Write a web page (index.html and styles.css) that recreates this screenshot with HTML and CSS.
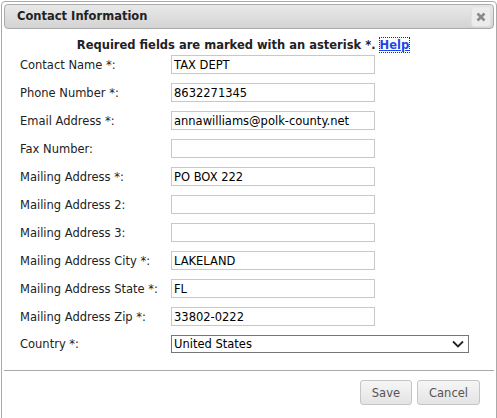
FILE: index.html
```html
<!DOCTYPE html>
<html>
<head>
<meta charset="utf-8">
<link rel="stylesheet" href="styles.css">
</head>
<body>
<div class="dialog">
  <div class="titlebar">
    <span class="title">Contact Information</span>
    <span class="close"><svg width="10" height="10" viewBox="0 0 10 10"><path d="M1.5 1.5 L8.5 8.5 M8.5 1.5 L1.5 8.5" stroke="#8a8a8a" stroke-width="2.6" stroke-linecap="butt"/></svg></span>
  </div>
  <div class="content">
    <p class="required">Required fields are marked with an asterisk *. <a class="help" href="#">Help</a></p>
    <div class="form">
      <label>Contact Name *:</label><input type="text" value="TAX DEPT">
      <label>Phone Number *:</label><input type="text" value="8632271345">
      <label>Email Address *:</label><input type="text" value="annawilliams@polk-county.net">
      <label>Fax Number:</label><input type="text" value="">
      <label>Mailing Address *:</label><input type="text" value="PO BOX 222">
      <label>Mailing Address 2:</label><input type="text" value="">
      <label>Mailing Address 3:</label><input type="text" value="">
      <label>Mailing Address City *:</label><input type="text" value="LAKELAND">
      <label>Mailing Address State *:</label><input type="text" value="FL">
      <label>Mailing Address Zip *:</label><input type="text" value="33802-0222">
      <label>Country *:</label>
      <div class="select"><span>United States</span><svg width="12" height="8" viewBox="0 0 12 8"><path d="M1 1.5 L6 6.5 L11 1.5" fill="none" stroke="#222" stroke-width="1.8"/></svg></div>
    </div>
  </div>
  <div class="buttonpane">
    <button class="btn">Save</button>
    <button class="btn">Cancel</button>
  </div>
</div>
</body>
</html>
```
FILE: styles.css
```css
html, body {
  margin: 0;
  padding: 0;
  background: #fff;
}
body {
  font-family: "DejaVu Sans", Verdana, sans-serif;
  font-size: 11.5px;
  color: #222;
}
.dialog {
  margin: 1px 0 0 1px;
  width: 490px;
  height: 430px;
  border: 1px solid #aaa;
  border-radius: 4px;
  padding: 2px;
}
.titlebar {
  height: 23px;
  border: 1px solid #aaa;
  border-radius: 4px;
  background: linear-gradient(#e9e9e9, #d3d3d3);
  display: flex;
  align-items: center;
  justify-content: space-between;
  padding: 0 2px 0 12px;
}
.title {
  font-weight: bold;
  font-size: 11.5px;
  color: #222;
  margin-top: -1px;
}
.close {
  width: 18px;
  height: 19px;
  border-radius: 3px;
  background: #ececec;
  border: 1px solid #e0e0e0;
  display: flex;
  align-items: center;
  justify-content: center;
}
.content {
  padding: 0 0 0 16px;
  height: 341px;
}
.required {
  margin: 0;
  padding-top: 9px;
  height: 17px;
  font-weight: bold;
  text-align: center;
  padding-right: 28px;
}
.help {
  color: #1a47e8;
  text-decoration: underline;
  outline: 1px dotted #333;
  outline-offset: 0;
}
.form {
  display: grid;
  grid-template-columns: 151px 204px;
  row-gap: 9px;
  align-items: center;
  margin-top: 0;
}
.form label {
  font-size: 11.5px;
  color: #222;
}
.form input {
  box-sizing: border-box;
  width: 204px;
  height: 19px;
  border: 1px solid #c8c8c8;
  padding: 0 2px;
  margin: 0;
  font-family: "DejaVu Sans", Verdana, sans-serif;
  font-size: 11.5px;
  color: #000;
  outline: none;
}
.select {
  box-sizing: border-box;
  width: 298px;
  height: 18px;
  border: 1px solid #767676;
  display: flex;
  align-items: center;
  justify-content: space-between;
  padding: 0 4px 0 2px;
  font-size: 11.5px;
  color: #000;
}
.buttonpane {
  border-top: 1px solid #aaa;
  display: flex;
  justify-content: flex-end;
  gap: 5px;
  padding: 9px 14px 0 0;
}
.btn {
  height: 25px;
  border: 1px solid #c5c5c5;
  border-radius: 3px;
  background: linear-gradient(#f6f6f6, #e4e4e4);
  font-family: "DejaVu Sans", Verdana, sans-serif;
  font-size: 11.5px;
  color: #555;
  padding: 0 11px;
}
```
